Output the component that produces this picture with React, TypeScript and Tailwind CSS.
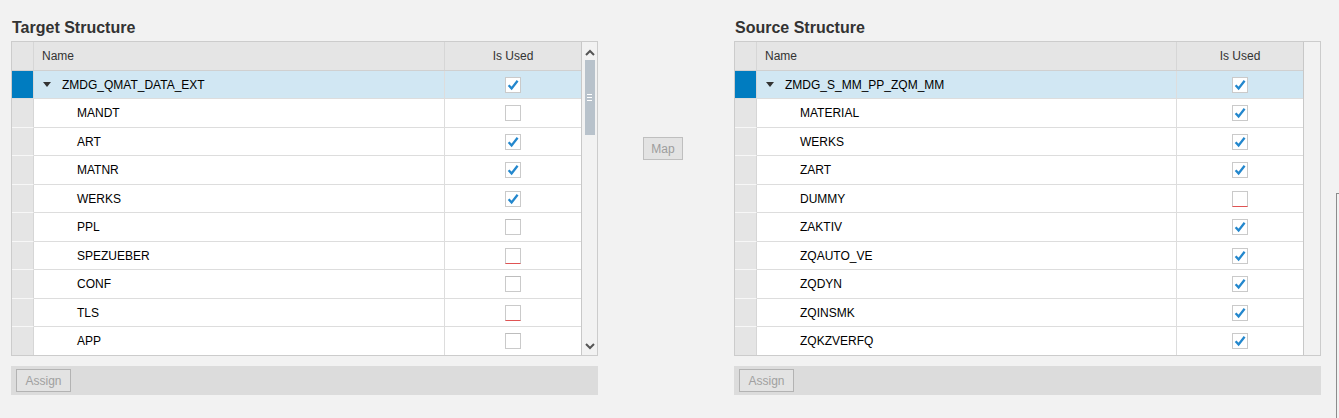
import React from "react";

type Row = { name: string; checked: boolean; invalid?: boolean; darkTop?: boolean };

const leftRows: Row[] = [
  { name: "MANDT", checked: false },
  { name: "ART", checked: true },
  { name: "MATNR", checked: true },
  { name: "WERKS", checked: true },
  { name: "PPL", checked: false, darkTop: true },
  { name: "SPEZUEBER", checked: false, invalid: true },
  { name: "CONF", checked: false, darkTop: true },
  { name: "TLS", checked: false, invalid: true },
  { name: "APP", checked: false, darkTop: true },
];

const rightRows: Row[] = [
  { name: "MATERIAL", checked: true },
  { name: "WERKS", checked: true },
  { name: "ZART", checked: true },
  { name: "DUMMY", checked: false, invalid: true },
  { name: "ZAKTIV", checked: true },
  { name: "ZQAUTO_VE", checked: true },
  { name: "ZQDYN", checked: true },
  { name: "ZQINSMK", checked: true },
  { name: "ZQKZVERFQ", checked: true },
];

const rowH = ["h-[29px]", "h-[28px]", "h-[29px]", "h-[28px]", "h-[29px]", "h-[28px]", "h-[29px]", "h-[28px]", "h-[28px]"];

function Checkbox({ checked, invalid, darkTop }: { checked: boolean; invalid?: boolean; darkTop?: boolean }) {
  return (
    <div
      className={
        "w-[16px] h-[16px] bg-white border border-[#cacaca] flex items-center justify-center " +
        (invalid ? "border-b-[#e05353] " : "") +
        (darkTop ? "border-t-[#bdbdbd] " : "")
      }
    >
      {checked && (
        <svg width="12" height="12" viewBox="0 0 12 12">
          <path d="M1.6 6.2 L4.6 9.4 L10.6 1.8" fill="none" stroke="#2387cd" strokeWidth="2.3" strokeLinejoin="miter" />
        </svg>
      )}
    </div>
  );
}

function Table({
  root,
  rows,
  nameW,
  usedW,
  scrollW,
  showScroll,
}: {
  root: string;
  rows: Row[];
  nameW: string;
  usedW: string;
  scrollW: string;
  showScroll: boolean;
}) {
  return (
    <div className="flex border border-[#cccccc] bg-[#f2f2f2]">
      <div className="flex flex-col border-r border-[#c8c8c8] bg-white">
        <div className="flex h-[29px] bg-[#e5e5e5] border-b border-[#d0d0d0]">
          <div className="w-[22px] border-r border-[#d6d6d6]" />
          <div className={nameW + " border-r border-[#d6d6d6] flex items-center pl-[8px] text-[12px] text-[#333333]"}>Name</div>
          <div className={usedW + " flex items-center justify-center text-[12px] text-[#333333]"}>Is Used</div>
        </div>
        <div className="flex h-[28px] border-b border-[#dddddd] bg-[#d1e7f3]">
          <div className="w-[22px] bg-[#007cc0] border-r border-[#d6d6d6]" />
          <div className={nameW + " border-r border-[#dddddd] flex items-center text-[12px] text-black"}>
            <svg width="8" height="5" viewBox="0 0 8 5" className="ml-[9px] mr-[11px]">
              <path d="M0 0 H8 L4 5 Z" fill="#333333" />
            </svg>
            {root}
          </div>
          <div className={usedW + " flex items-center justify-center"}>
            <Checkbox checked={true} />
          </div>
        </div>
        {rows.map((r, i) => (
          <div
            key={r.name + i}
            className={"flex " + rowH[i] + " " + (i < rows.length - 1 ? "border-b border-[#dddddd]" : "")}
          >
            <div className={"w-[22px] bg-[#e5e5e5] border-r border-[#d6d6d6] " + (i < rows.length - 1 ? "-mb-px border-b border-b-[#f7f7f7]" : "")} />
            <div className={nameW + " border-r border-[#dddddd] flex items-center pl-[43px] text-[12px] text-black"}>{r.name}</div>
            <div className={usedW + " flex items-center justify-center"}>
              <Checkbox checked={r.checked} invalid={r.invalid} darkTop={r.darkTop} />
            </div>
          </div>
        ))}
      </div>
      <div className={scrollW + " flex flex-col items-center"}>
        {showScroll && (
          <>
            <svg width="10" height="7" viewBox="0 0 10 7" className="mt-[7px]">
              <path d="M1 6 L5 2 L9 6" fill="none" stroke="#555555" strokeWidth="2" />
            </svg>
            <div className="mt-[4px] w-[10px] h-[75px] bg-[#b8c2cb] flex flex-col items-center justify-center gap-[2px]">
              <div className="w-[5px] h-[1px] bg-white" />
              <div className="w-[5px] h-[1px] bg-white" />
              <div className="w-[5px] h-[1px] bg-white" />
            </div>
            <div className="flex-1" />
            <svg width="10" height="7" viewBox="0 0 10 7" className="mb-[5px]">
              <path d="M1 1 L5 5 L9 1" fill="none" stroke="#555555" strokeWidth="2" />
            </svg>
          </>
        )}
      </div>
    </div>
  );
}

function Panel({
  title,
  root,
  rows,
  nameW,
  usedW,
  scrollW,
  showScroll,
}: {
  title: string;
  root: string;
  rows: Row[];
  nameW: string;
  usedW: string;
  scrollW: string;
  showScroll: boolean;
}) {
  return (
    <div className="w-[587px] flex flex-col">
      <div className="h-[41px] pt-[18px] pl-[1px] text-[16px] leading-[19px] font-bold text-[#333333]">{title}</div>
      <Table root={root} rows={rows} nameW={nameW} usedW={usedW} scrollW={scrollW} showScroll={showScroll} />
      <div className="mt-[10px] h-[29px] bg-[#dcdcdc] flex items-center pl-[5px]">
        <div className="w-[55px] h-[23px] border border-[#b3b3b3] bg-[#e3e3e3] flex items-center justify-center text-[12px] text-[#a0a0a0]">
          Assign
        </div>
      </div>
    </div>
  );
}

export default function App() {
  return (
    <div className="relative w-[1339px] h-[418px] overflow-hidden bg-[#f2f2f2] font-['Liberation_Sans',Arial,sans-serif] flex pl-[11px]">
      <Panel
        title="Target Structure"
        root="ZMDG_QMAT_DATA_EXT"
        rows={leftRows}
        nameW="w-[411px]"
        usedW="w-[136px]"
        scrollW="w-[16px]"
        showScroll={true}
      />
      <div className="w-[136px] pt-[137px] pl-[45px]">
        <div className="w-[40px] h-[23px] border border-[#bfbfbf] bg-[#e3e3e3] flex items-center justify-center text-[12px] text-[#9d9d9d]">
          Map
        </div>
      </div>
      <Panel
        title="Source Structure"
        root="ZMDG_S_MM_PP_ZQM_MM"
        rows={rightRows}
        nameW="w-[420px]"
        usedW="w-[126px]"
        scrollW="w-[17px]"
        showScroll={false}
      />
      <div className="absolute left-[1336px] top-[193px] w-[10px] h-[240px] border-l border-t border-[#8c8c8c]" />
    </div>
  );
}
